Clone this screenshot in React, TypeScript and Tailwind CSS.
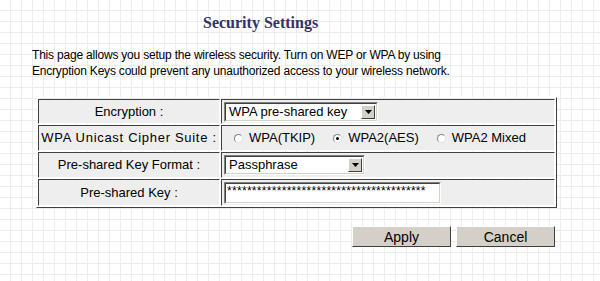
import React from "react";

function Select({ width, text }: { width: number; text: string }) {
  return (
    <div
      className="flex h-[20px] bg-white border-t-[#808080] border-l-[#808080] border-b-[#ffffff] border-r-[#ffffff] border"
      style={{ width }}
    >
      <div className="flex flex-1 border-t-[#404040] border-l-[#404040] border-b-[#d4d0c8] border-r-[#d4d0c8] border">
        <div className="flex-1 pl-[3px] text-[13px] leading-[16px] text-black whitespace-nowrap overflow-hidden">{text}</div>
        <div className="w-[14px] h-[14px] mt-[1px] mr-[1px] bg-[#d4d0c8] border border-t-[#ffffff] border-l-[#ffffff] border-b-[#404040] border-r-[#404040] flex items-center justify-center">
          <svg width="7" height="4" viewBox="0 0 7 4"><path d="M0 0h7L3.5 4z" fill="#000" /></svg>
        </div>
      </div>
    </div>
  );
}

function Radio({ checked, label }: { checked?: boolean; label: string }) {
  return (
    <div className="flex items-center">
      <div className="w-[9px] h-[9px] rounded-full bg-white border border-t-[#808080] border-l-[#808080] border-b-[#e0e0e0] border-r-[#e0e0e0] flex items-center justify-center">
        {checked && <div className="w-[3px] h-[3px] rounded-full bg-black" />}
      </div>
      <span className="ml-[6px] text-[13px] leading-[16px]">{label}</span>
    </div>
  );
}

export default function App() {
  const cellL = "border border-t-[#404040] border-l-[#404040] border-b-[#ffffff] border-r-[#ffffff] bg-[#eeeeee] text-center text-[13px] p-0 whitespace-nowrap";
  const cellR = "border border-t-[#404040] border-l-[#404040] border-b-[#ffffff] border-r-[#ffffff] bg-[#eeeeee] text-left p-0";
  return (
    <div className="w-[600px] h-[281px] overflow-hidden bg-white bg-[linear-gradient(to_right,#ececec_1px,transparent_1px),linear-gradient(to_bottom,#ececec_1px,transparent_1px)] bg-[size:11px_11px] bg-[position:10px_10px] font-['Liberation_Sans',Arial,sans-serif] text-black">
      <h1 className="pl-[203px] pt-[13px] font-['Liberation_Serif',serif] font-bold text-[16px] leading-[20px] text-[#333366]">
        Security Settings
      </h1>
      <p className="ml-[32px] mt-[14px] text-[12px] leading-[16px] tracking-[-0.2px] text-black">
        This page allows you setup the wireless security. Turn on WEP or WPA by using
        <br />
        Encryption Keys could prevent any unauthorized access to your wireless network.
      </p>
      <table className="ml-[36px] mt-[18px] w-[521px] border-separate border-spacing-[1px] border border-t-[#ffffff] border-l-[#ffffff] border-b-[#404040] border-r-[#404040]">
        <tbody>
          <tr className="h-[25px]">
            <td className={cellL + " w-[182px]"}>Encryption :</td>
            <td className={cellR}>
              <div className="pl-[2px]"><Select width={154} text="WPA pre-shared key" /></div>
            </td>
          </tr>
          <tr className="h-[26px]">
            <td className={cellL + " tracking-[0.7px]"}>WPA Unicast Cipher Suite :</td>
            <td className={cellR}>
              <div className="flex gap-[18px] pl-[12px]">
                <Radio label="WPA(TKIP)" />
                <Radio checked label="WPA2(AES)" />
                <Radio label="WPA2 Mixed" />
              </div>
            </td>
          </tr>
          <tr className="h-[26px]">
            <td className={cellL}>Pre-shared Key Format :</td>
            <td className={cellR}>
              <div className="pl-[2px]"><Select width={141} text="Passphrase" /></div>
            </td>
          </tr>
          <tr className="h-[27px]">
            <td className={cellL}>Pre-shared Key :</td>
            <td className={cellR}>
              <div className="pl-[2px]">
                <div className="w-[217px] h-[22px] bg-white border border-t-[#808080] border-l-[#808080] border-b-[#ffffff] border-r-[#ffffff]">
                  <div className="h-full border border-t-[#404040] border-l-[#404040] border-b-[#d4d0c8] border-r-[#d4d0c8] pl-[1px] text-[12px] leading-[14px] tracking-[0.3px] overflow-hidden whitespace-nowrap">
                    ****************************************
                  </div>
                </div>
              </div>
            </td>
          </tr>
        </tbody>
      </table>
      <div className="flex gap-[5px] ml-[352px] mt-[18px]">
        <button className="w-[99px] h-[21px] bg-[#d4d0c8] border border-t-[#ffffff] border-l-[#ffffff] border-b-[#404040] border-r-[#404040] text-[14px] leading-[16px]">Apply</button>
        <button className="w-[99px] h-[21px] bg-[#d4d0c8] border border-t-[#ffffff] border-l-[#ffffff] border-b-[#404040] border-r-[#404040] text-[14px] leading-[16px]">Cancel</button>
      </div>
    </div>
  );
}
